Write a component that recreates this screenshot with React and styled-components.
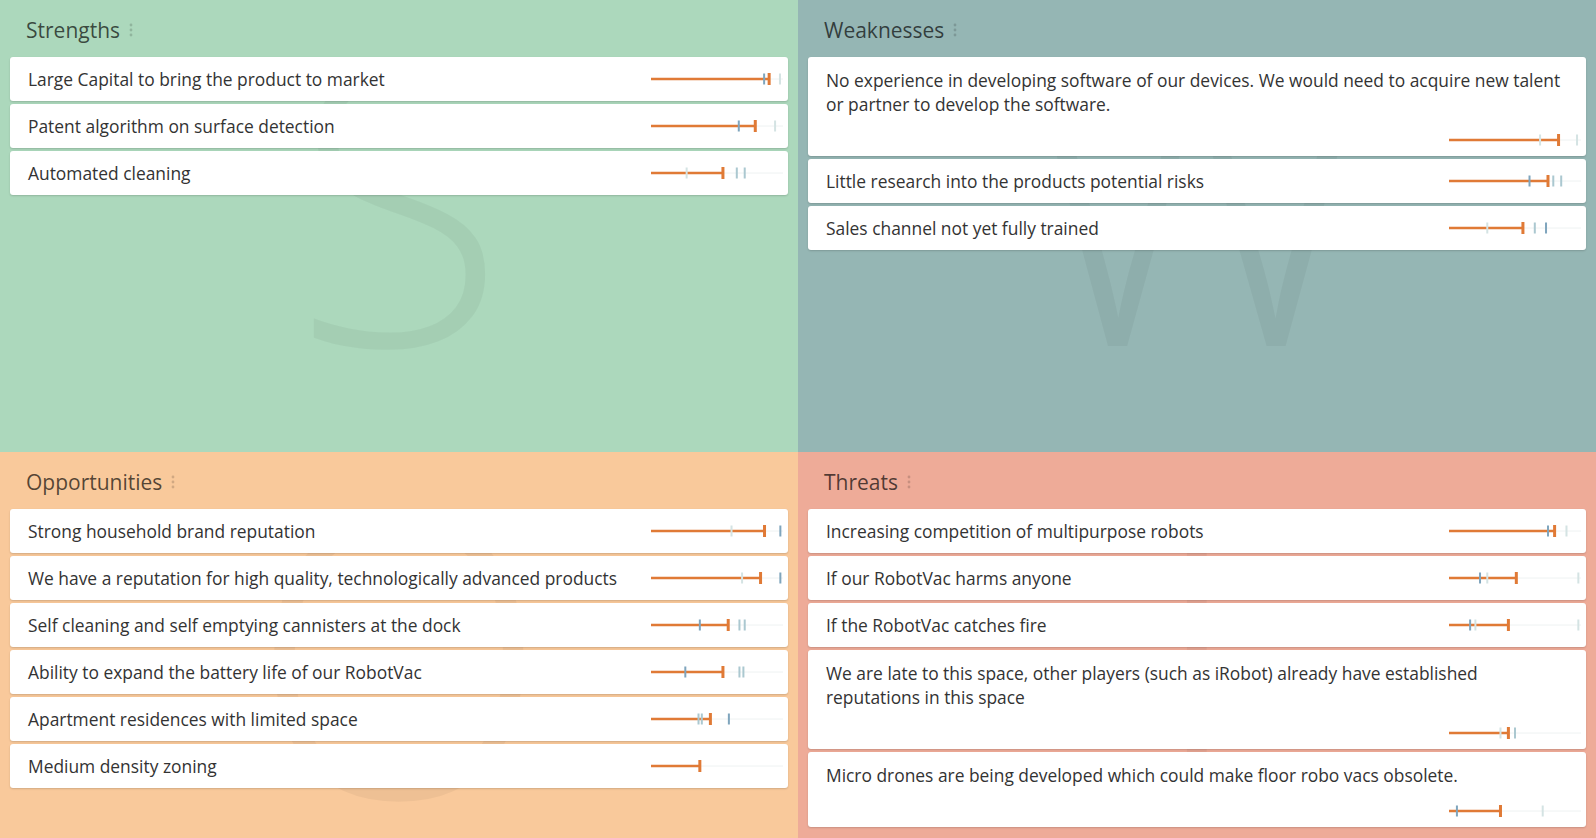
import styled, { createGlobalStyle } from "styled-components";

const GlobalStyle = createGlobalStyle`
  html, body {
    margin: 0;
    padding: 0;
  }
  body {
    font-family: "Open Sans", "Liberation Sans", sans-serif;
    color: #333;
  }
`;

const CHART_W = 132;
const TICK_COLORS = { b: "#7fa5bd", m: "#abc8d0", l: "#d4e3e3" };

const quadrants = [
  {
    title: "Strengths",
    letter: "S",
    bg: "#acd8bc",
    items: [
      { text: "Large Capital to bring the product to market", v: 0.895, ticks: [[0.857, "b"], [0.977, "l"]] },
      { text: "Patent algorithm on surface detection", v: 0.79, ticks: [[0.665, "b"], [0.94, "l"]] },
      { text: "Automated cleaning", v: 0.545, ticks: [[0.27, "l"], [0.65, "m"], [0.71, "m"]] },
    ],
  },
  {
    title: "Weaknesses",
    letter: "W",
    bg: "#95b6b4",
    items: [
      {
        text: "No experience in developing software of our devices. We would need to acquire new talent or partner to develop the software.",
        v: 0.83,
        ticks: [[0.69, "l"], [0.97, "l"]],
        stacked: true,
      },
      { text: "Little research into the products potential risks", v: 0.75, ticks: [[0.61, "b"], [0.79, "m"], [0.85, "m"]] },
      { text: "Sales channel not yet fully trained", v: 0.56, ticks: [[0.29, "l"], [0.65, "m"], [0.735, "b"]] },
    ],
  },
  {
    title: "Opportunities",
    letter: "O",
    bg: "#f9c99b",
    items: [
      { text: "Strong household brand reputation", v: 0.86, ticks: [[0.61, "l"], [0.98, "b"]] },
      { text: "We have a reputation for high quality, technologically advanced products", v: 0.83, ticks: [[0.69, "l"], [0.98, "b"]] },
      { text: "Self cleaning and self emptying cannisters at the dock", v: 0.585, ticks: [[0.37, "b"], [0.67, "m"], [0.71, "m"]] },
      { text: "Ability to expand the battery life of our RobotVac", v: 0.545, ticks: [[0.26, "b"], [0.67, "m"], [0.7, "m"]] },
      { text: "Apartment residences with limited space", v: 0.45, ticks: [[0.36, "m"], [0.385, "m"], [0.59, "b"]] },
      { text: "Medium density zoning", v: 0.37, ticks: [] },
    ],
  },
  {
    title: "Threats",
    letter: "T",
    bg: "#eeab98",
    items: [
      { text: "Increasing competition of multipurpose robots", v: 0.8, ticks: [[0.75, "b"], [0.89, "l"]] },
      { text: "If our RobotVac harms anyone", v: 0.51, ticks: [[0.235, "b"], [0.29, "l"], [0.98, "l"]] },
      { text: "If the RobotVac catches fire", v: 0.45, ticks: [[0.16, "b"], [0.2, "l"], [0.98, "l"]] },
      {
        text: "We are late to this space, other players (such as iRobot) already have established reputations in this space",
        v: 0.45,
        ticks: [[0.39, "l"], [0.5, "m"]],
        stacked: true,
      },
      {
        text: "Micro drones are being developed which could make floor robo vacs obsolete.",
        v: 0.39,
        ticks: [[0.06, "b"], [0.71, "l"]],
        stacked: true,
      },
    ],
  },
];

const Board = styled.main`
  display: grid;
  grid-template-columns: 1fr 1fr;
  grid-template-rows: 452px 386px;
  width: 1596px;
  height: 838px;
  overflow: hidden;
`;

const Panel = styled.section`
  position: relative;
  overflow: hidden;
  background: ${(p) => p.$bg};
  padding: 14px 10px 0;
`;

const Watermark = styled.div`
  position: absolute;
  top: 0;
  left: 0;
  right: 0;
  text-align: center;
  font-family: "Open Sans", sans-serif;
  font-size: 390px;
  font-weight: 300;
  line-height: 1;
  color: rgba(0, 0, 0, 0.045);
  pointer-events: none;
  user-select: none;
`;

const Content = styled.div`
  position: relative;
  z-index: 1;
`;

const Header = styled.h2`
  display: flex;
  align-items: center;
  gap: 9px;
  height: 32px;
  margin: 0 0 11px;
  padding-left: 16px;
  font-size: 21px;
  font-weight: 400;
  color: rgba(0, 0, 0, 0.68);
`;

const List = styled.div`
  display: flex;
  flex-direction: column;
  gap: 3px;
`;

const Card = styled.div`
  display: flex;
  flex-direction: ${(p) => (p.$stacked ? "column" : "row")};
  align-items: ${(p) => (p.$stacked ? "stretch" : "center")};
  box-sizing: border-box;
  min-height: 44px;
  padding: ${(p) => (p.$stacked ? "11px 5px 9px 18px" : "10px 5px 10px 18px")};
  background: #fff;
  border-radius: 3px;
  box-shadow: 0 1px 2px rgba(0, 0, 0, 0.16);
`;

const Text = styled.div`
  flex: 1;
  padding-right: 13px;
  font-size: 17.4px;
  line-height: 24px;
  color: #333;
`;

const ChartBox = styled.div`
  flex: none;
  align-self: ${(p) => (p.$stacked ? "flex-end" : "center")};
  margin-top: ${(p) => (p.$stacked ? "17px" : "0")};
  width: ${CHART_W}px;
  height: 14px;

  svg {
    display: block;
  }
`;

function Kebab() {
  return (
    <svg width="4" height="16" viewBox="0 0 4 16" aria-hidden="true">
      <circle cx="2" cy="3" r="1.4" fill="rgba(0,0,0,0.16)" />
      <circle cx="2" cy="8" r="1.4" fill="rgba(0,0,0,0.16)" />
      <circle cx="2" cy="13" r="1.4" fill="rgba(0,0,0,0.16)" />
    </svg>
  );
}

function Chart({ v, ticks, stacked }) {
  const end = v * CHART_W;
  return (
    <ChartBox $stacked={stacked}>
      <svg width={CHART_W} height="14" viewBox={`0 0 ${CHART_W} 14`}>
        <line x1="0" y1="7" x2={CHART_W} y2="7" stroke="#eef2f2" strokeWidth="1" />
        <line x1="0" y1="7" x2={end} y2="7" stroke="#e07a36" strokeWidth="2.5" />
        {ticks.map(([x, c], i) => (
          <rect key={i} x={x * CHART_W - 1} y="1.5" width="2" height="11" fill={TICK_COLORS[c]} />
        ))}
        <rect x={end - 1.5} y="1" width="3" height="12" fill="#e07a36" />
      </svg>
    </ChartBox>
  );
}

export default function App() {
  return (
    <>
      <GlobalStyle />
      <Board>
        {quadrants.map((q) => (
          <Panel key={q.title} $bg={q.bg}>
            <Watermark aria-hidden="true">{q.letter}</Watermark>
            <Content>
              <Header>
                {q.title}
                <Kebab />
              </Header>
              <List>
                {q.items.map((item) => (
                  <Card key={item.text} $stacked={item.stacked}>
                    <Text>{item.text}</Text>
                    <Chart v={item.v} ticks={item.ticks} stacked={item.stacked} />
                  </Card>
                ))}
              </List>
            </Content>
          </Panel>
        ))}
      </Board>
    </>
  );
}
